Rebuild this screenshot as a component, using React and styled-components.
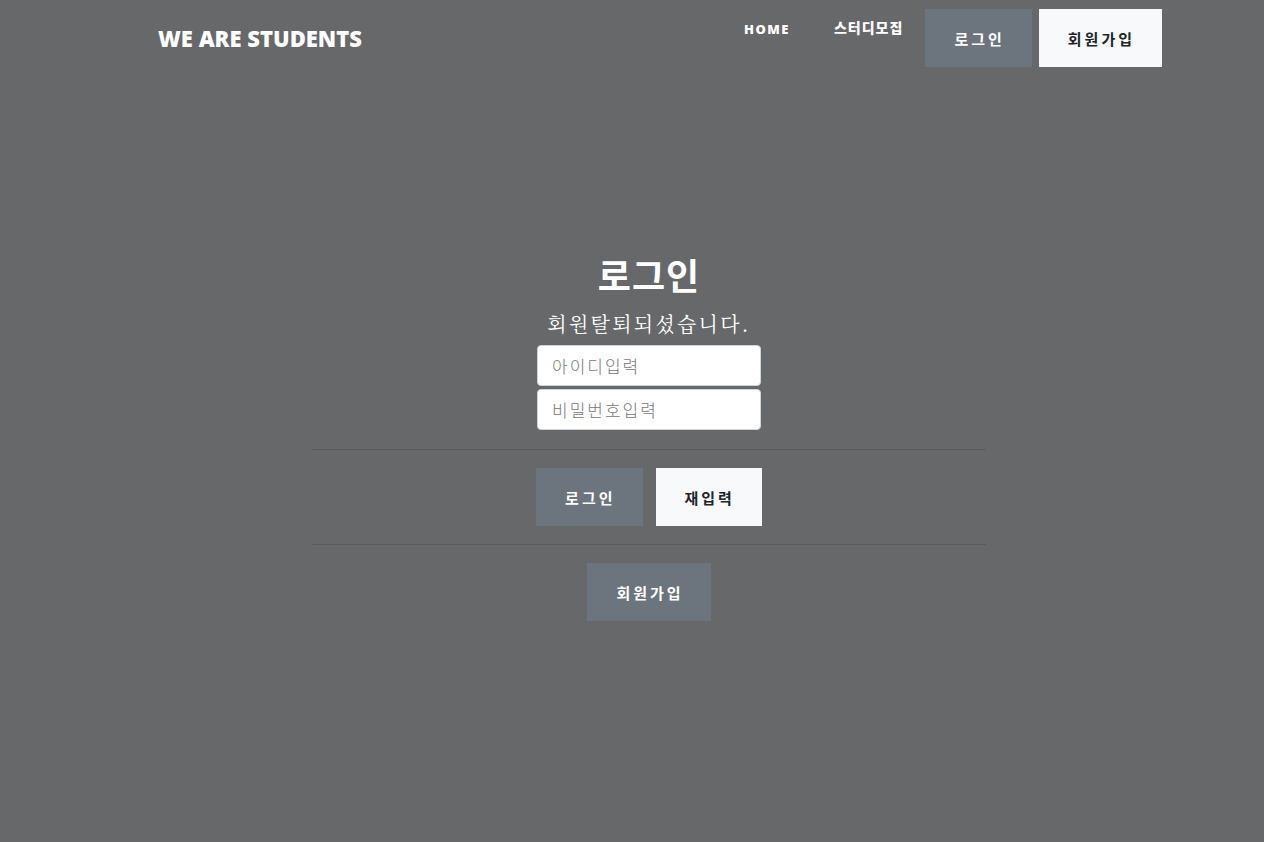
import styled, { createGlobalStyle } from 'styled-components';

const GlobalStyle = createGlobalStyle`
  html, body {
    margin: 0;
    padding: 0;
    background: #67686a;
    font-family: "Open Sans", "Noto Sans CJK KR", sans-serif;
  }
  * { box-sizing: border-box; }
`;

const Page = styled.div`
  min-height: 842px;
  background: #67686a;
  color: #fff;
`;

const Header = styled.header`
  display: flex;
  justify-content: space-between;
  align-items: flex-start;
  padding: 9px 102px 0 158px;
  height: 75px;
`;

const Logo = styled.div`
  font-family: "Open Sans", sans-serif;
  font-weight: 800;
  font-size: 22px;
  color: #fff;
  margin-top: 14px;
`;

const Nav = styled.nav`
  display: flex;
  align-items: flex-start;
`;

const NavLink = styled.a`
  font-family: "Open Sans", "Noto Sans CJK KR", sans-serif;
  font-weight: 800;
  font-size: ${(p) => (p.$upper ? '13px' : '14px')};
  letter-spacing: ${(p) => (p.$upper ? '1.5px' : '1px')};
  color: #fff;
  text-decoration: none;
  padding: ${(p) => (p.$upper ? '11px 22px 0' : '8px 22px 0')};
`;

const Button = styled.button`
  font-family: "Noto Sans CJK KR", sans-serif;
  font-weight: 700;
  font-size: 15px;
  letter-spacing: 3px;
  height: 58px;
  padding: 0 27px 0 29px;
  border: none;
  border-radius: 0;
  cursor: pointer;
  background: ${(p) => (p.$light ? '#f8f9fa' : '#6c757d')};
  color: ${(p) => (p.$light ? '#212529' : '#fff')};
`;

const NavButtons = styled.div`
  display: flex;
  gap: 7px;
`;

const Main = styled.main`
  display: flex;
  flex-direction: column;
  align-items: center;
  padding: 178px 0 0 34px;
`;

const Title = styled.h1`
  font-family: "Noto Sans CJK KR", sans-serif;
  font-weight: 700;
  font-size: 36px;
  letter-spacing: 1px;
  line-height: 43px;
  margin: 0;
`;

const Message = styled.p`
  font-family: "Noto Serif CJK KR", "Noto Sans CJK KR", serif;
  font-size: 20px;
  letter-spacing: 2.3px;
  line-height: 30px;
  margin: 13px 0 6px;
`;

const Input = styled.input`
  width: 224px;
  height: 41px;
  margin-bottom: 3px;
  border: 1px solid #ced4da;
  border-radius: 4px;
  padding: 0 14px;
  font-family: "Noto Sans CJK KR", sans-serif;
  font-weight: 300;
  font-size: 17px;
  letter-spacing: 2px;
  color: #495057;
  background: #fff;
  &::placeholder { color: #777777; }
`;

const Divider = styled.hr`
  width: 674px;
  margin: ${(p) => p.$m || '16px 0 18px'};
  border: 0;
  border-top: 1px solid rgba(0, 0, 0, 0.12);
`;

const Row = styled.div`
  display: flex;
  gap: 13px;
`;

export default function App() {
  return (
    <Page>
      <GlobalStyle />
      <Header>
        <Logo>WE ARE STUDENTS</Logo>
        <Nav>
          <NavLink $upper href="#">HOME</NavLink>
          <NavLink href="#">스터디모집</NavLink>
          <NavButtons>
            <Button>로그인</Button>
            <Button $light>회원가입</Button>
          </NavButtons>
        </Nav>
      </Header>
      <Main>
        <Title>로그인</Title>
        <Message>회원탈퇴되셨습니다.</Message>
        <Input placeholder="아이디입력" />
        <Input placeholder="비밀번호입력" />
        <Divider />
        <Row>
          <Button>로그인</Button>
          <Button $light>재입력</Button>
        </Row>
        <Divider $m="18px 0 18px" />
        <Button>회원가입</Button>
      </Main>
    </Page>
  );
}
